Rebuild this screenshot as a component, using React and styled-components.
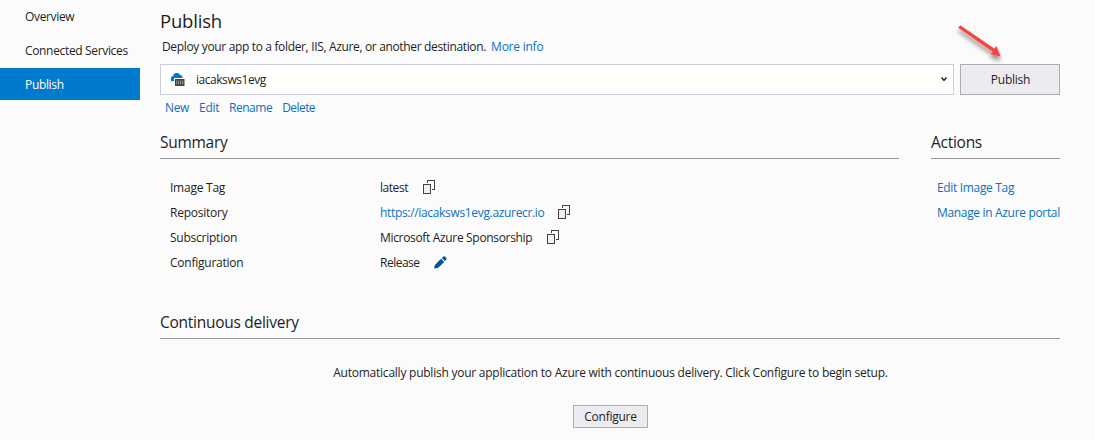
import React from "react";
import styled, { createGlobalStyle } from "styled-components";

const Global = createGlobalStyle`
  *, *::before, *::after { box-sizing: border-box; }
  body {
    margin: 0;
    background: #fbfbfb;
    color: #1e1e1e;
    font-family: "Open Sans", "Noto Sans", sans-serif;
    font-size: 12px;
    line-height: 16px;
    letter-spacing: -0.33px;
    overflow: hidden;
  }
`;

const Page = styled.div`
  display: flex;
  width: 1095px;
  height: 440px;
  background: #fbfbfb;
`;

const Sidebar = styled.nav`
  flex: none;
  width: 140px;
  display: flex;
  flex-direction: column;
  gap: 2px;
`;

const NavItem = styled.a`
  height: 32px;
  padding: 9px 0 0 25px;
  white-space: nowrap;
  letter-spacing: -0.34px;
  color: ${(p) => (p.$active ? "#fff" : "#1e1e1e")};
  background: ${(p) => (p.$active ? "#007acc" : "transparent")};
`;

const Main = styled.main`
  width: 900px;
  margin-left: 20px;
  display: flex;
  flex-direction: column;
`;

const Text = styled.span`
  white-space: nowrap;
  letter-spacing: ${(p) => p.$track ?? -0.33}px;
`;

const Link = styled(Text).attrs({ as: "a" })`
  color: #0e70c0;
`;

const Title = styled.h1`
  margin: 0;
  padding-top: 9px;
  height: 39px;
  font-size: 18.5px;
  line-height: 24px;
  font-weight: 400;
  letter-spacing: -0.2px;
`;

const Intro = styled.p`
  display: flex;
  gap: 5px;
  margin: 0;
  padding-left: 2px;
  height: 25px;
`;

const ProfileRow = styled.div`
  display: flex;
  gap: 6px;
  height: 31px;
`;

const Select = styled.div`
  flex: 1;
  display: flex;
  align-items: center;
  padding: 0 6px 0 10px;
  border: 1px solid #cccedb;
  background: #fff;
`;

const SelectValue = styled(Text)`
  flex: 1;
  padding-left: 11px;
`;

const Button = styled.button`
  width: ${(p) => p.$w}px;
  height: ${(p) => p.$h}px;
  padding: 0 0 0 1px;
  border: 1px solid #acacac;
  border-radius: 0;
  background: #ececf0;
  color: #1e1e1e;
  font: inherit;
  letter-spacing: -0.25px;
`;

const ProfileLinks = styled.div`
  display: flex;
  gap: 10px;
  padding: 5px 0 0 5px;
  height: 36px;
`;

const Columns = styled.div`
  display: flex;
  justify-content: space-between;
  height: 180px;
`;

const Section = styled.section`
  width: ${(p) => p.$w}px;
`;

const SectionTitle = styled.h2`
  margin: 0;
  height: 28px;
  padding-top: 1px;
  border-bottom: 1px solid #999;
  font-size: 15.5px;
  line-height: 20px;
  font-weight: 400;
  white-space: nowrap;
  letter-spacing: -0.27px;
`;

const Rows = styled.div`
  padding: 16px 0 0 ${(p) => p.$indent}px;
`;

const Row = styled.div`
  display: flex;
  align-items: center;
  height: 25px;
`;

const RowLabel = styled(Text)`
  width: 210px;
`;

const RowIcon = styled.span`
  display: flex;
  margin: -1px 0 0 ${(p) => p.$gap}px;
`;

const Delivery = styled.div`
  display: flex;
  flex-direction: column;
  align-items: center;
  gap: 24px;
  padding-top: 26px;
`;

const DeliveryText = styled(Text)`
  padding-left: 1px;
`;

const ArrowOverlay = styled.svg`
  position: absolute;
  left: 950px;
  top: 18px;
  pointer-events: none;
`;

const CopyIcon = () => (
  <svg width="12" height="14" viewBox="0 0 12 14" fill="none" shapeRendering="crispEdges">
    <path d="M4.5 3V0.5H11.5V9.5H9" stroke="#424242" />
    <rect x="0.5" y="4.5" width="7" height="9" fill="#f0eff1" stroke="#424242" />
  </svg>
);

const PencilIcon = () => (
  <svg width="13" height="13" viewBox="0 0 13 13" fill="#00539c">
    <path d="M0 12.6L0.9 8.9L7 2.8L10.2 6L4 12Z" />
    <path d="M7.8 2L9.3 0.6Q10.1 0 10.8 0.6L12.3 2.1Q12.9 2.8 12.3 3.5L10.9 5.1Z" />
  </svg>
);

const CloudContainerIcon = () => (
  <svg width="14" height="13" viewBox="0 0 14 13">
    <path d="M3 8H2A2 2 0 0 1 0.3 4.3A2 2 0 0 1 2.1 2.9A3.7 3.7 0 0 1 9 1.8A2.8 2.8 0 0 1 11.4 5H3Z" fill="#0078d0" />
    <rect x="3" y="5" width="11" height="8" fill="#fff" />
    <rect x="4" y="6" width="9.5" height="7" fill="#424242" />
    <path d="M5.7 7.5V11.5M7.7 7.5V11.5M9.7 7.5V11.5M11.7 7.5V11.5" stroke="#b0b0b0" strokeWidth="0.8" />
  </svg>
);

const ChevronIcon = () => (
  <svg width="6" height="5" viewBox="0 0 6 5">
    <path d="M0.6 0.6L3 3.4L5.4 0.6" fill="none" stroke="#1e1e1e" strokeWidth="1.5" />
  </svg>
);

const PointerArrow = () => (
  <ArrowOverlay width="60" height="52" viewBox="0 0 60 52">
    <defs>
      <filter id="shadow" x="-30%" y="-30%" width="160%" height="170%">
        <feDropShadow dx="0" dy="4" stdDeviation="2" floodColor="#000" floodOpacity="0.45" />
      </filter>
    </defs>
    <g filter="url(#shadow)" fill="#fb4040">
      <path d="M10.2 7.6L44.7 31.1L46.2 28.2L50.4 38.4L40.8 35.7L43 33.7L8.6 9.8Z" stroke="#fb4040" strokeWidth="0.5" />
    </g>
  </ArrowOverlay>
);

const summary = [
  { label: "Image Tag", value: "latest", track: -0.45, gap: 15, Icon: CopyIcon },
  { label: "Repository", value: "https://iacaksws1evg.azurecr.io", link: true, gap: 14, Icon: CopyIcon },
  { label: "Subscription", value: "Microsoft Azure Sponsorship", gap: 15, Icon: CopyIcon },
  { label: "Configuration", value: "Release", track: -0.5, gap: 14, Icon: PencilIcon },
];

export default function App() {
  return (
    <>
      <Global />
      <Page>
        <Sidebar>
          <NavItem>Overview</NavItem>
          <NavItem>Connected Services</NavItem>
          <NavItem $active>Publish</NavItem>
        </Sidebar>
        <Main>
          <Title>Publish</Title>
          <Intro>
            <Text $track={-0.345}>Deploy your app to a folder, IIS, Azure, or another destination.</Text>
            <Link $track={-0.23}>More info</Link>
          </Intro>
          <ProfileRow>
            <Select>
              <CloudContainerIcon />
              <SelectValue $track={-0.46}>iacaksws1evg</SelectValue>
              <ChevronIcon />
            </Select>
            <Button $w={100} $h={31}>Publish</Button>
          </ProfileRow>
          <ProfileLinks>
            <Link>New</Link>
            <Link>Edit</Link>
            <Link $track={-0.5}>Rename</Link>
            <Link $track={-0.55}>Delete</Link>
          </ProfileLinks>
          <Columns>
            <Section $w={739}>
              <SectionTitle>Summary</SectionTitle>
              <Rows $indent={10}>
                {summary.map(({ label, value, link, track, gap, Icon }) => (
                  <Row key={label}>
                    <RowLabel $track={-0.24}>{label}</RowLabel>
                    {link ? <Link>{value}</Link> : <Text $track={track}>{value}</Text>}
                    <RowIcon $gap={gap}><Icon /></RowIcon>
                  </Row>
                ))}
              </Rows>
            </Section>
            <Section $w={129}>
              <SectionTitle>Actions</SectionTitle>
              <Rows $indent={6}>
                <Row><Link>Edit Image Tag</Link></Row>
                <Row><Link>Manage in Azure portal</Link></Row>
              </Rows>
            </Section>
          </Columns>
          <Section $w={900}>
            <SectionTitle>Continuous delivery</SectionTitle>
            <Delivery>
              <DeliveryText $track={-0.24}>Automatically publish your application to Azure with continuous delivery. Click Configure to begin setup.</DeliveryText>
              <Button $w={75} $h={23}>Configure</Button>
            </Delivery>
          </Section>
        </Main>
      </Page>
      <PointerArrow />
    </>
  );
}
